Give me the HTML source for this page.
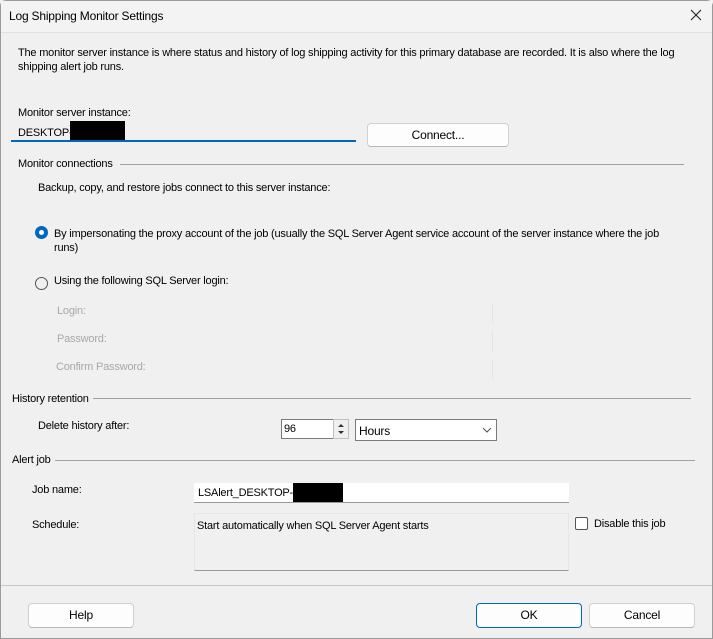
<!DOCTYPE html>
<html><head><meta charset="utf-8">
<style>
*{box-sizing:border-box;margin:0;padding:0}
body{width:713px;height:639px;background:#f0f0f0;font-family:"Liberation Sans",sans-serif;font-size:11px;letter-spacing:-0.2px;color:#000;position:relative;overflow:hidden}
.a{position:absolute;white-space:nowrap}
.frame{position:absolute;left:0;top:0;width:713px;height:639px;border:1px solid #9a9a9a;border-radius:6px 6px 0 0}
.title{position:absolute;left:1px;top:1px;width:711px;height:31px;background:#f3f3f3}
.line{position:absolute;height:1px;background:#a0a0a0}
.gray{color:#a8a8a8}
.btn{position:absolute;background:#fdfdfd;border:1px solid #d0d0d0;border-bottom-color:#b8b8b8;border-radius:4px;text-align:center;font-size:12px}
.radio{position:absolute;width:13px;height:13px;border-radius:50%;border:1px solid #555;background:#f0f0f0}
</style></head><body>
<div class="frame"></div>
<div class="title"></div>
<div class="a" style="left:9px;top:9px;font-size:12px">Log Shipping Monitor Settings</div>
<svg class="a" style="left:690px;top:9px" width="12" height="12"><path d="M1 1L11 11M11 1L1 11" stroke="#222" stroke-width="1.1"/></svg>
<div class="line" style="left:1px;top:32px;width:711px;background:#e2e2e2"></div>

<div class="a" style="left:18px;top:46px;line-height:14px">The monitor server instance is where status and history of log shipping activity for this primary database are recorded. It is also where the log<br>shipping alert job runs.</div>

<div class="a" style="left:18px;top:107px">Monitor server instance:</div>
<div class="a" style="left:18px;top:127px">DESKTOP-</div>
<div class="a" style="left:70px;top:121px;width:55px;height:21px;background:#000"></div>
<div class="a" style="left:11px;top:140px;width:345px;height:2px;background:#0067c0"></div>
<div class="btn" style="left:367px;top:123px;width:142px;height:24px;line-height:22px">Connect...</div>

<div class="a" style="left:18px;top:158px">Monitor connections</div>
<div class="line" style="left:120px;top:164px;width:564px"></div>
<div class="a" style="left:38px;top:182px">Backup, copy, and restore jobs connect to this server instance:</div>

<div class="radio" style="left:35px;top:226px;border:none;background:#0067c0"></div>
<div class="a" style="left:39px;top:230px;width:5px;height:5px;border-radius:50%;background:#fff"></div>
<div class="a" style="left:54px;top:227px;line-height:14px">By impersonating the proxy account of the job (usually the SQL Server Agent service account of the server instance where the job<br>runs)</div>

<div class="radio" style="left:35px;top:277px"></div>
<div class="a" style="left:54px;top:275px">Using the following SQL Server login:</div>

<div class="a gray" style="left:57px;top:305px">Login:</div>
<div class="a gray" style="left:57px;top:333px">Password:</div>
<div class="a gray" style="left:56px;top:361px">Confirm Password:</div>
<div class="a" style="left:359px;top:303px;width:134px;height:20px;border-right:1px solid #e4e4e4"></div>
<div class="a" style="left:359px;top:331px;width:134px;height:20px;border-right:1px solid #e4e4e4"></div>
<div class="a" style="left:359px;top:359px;width:134px;height:20px;border-right:1px solid #e4e4e4"></div>

<div class="a" style="left:12px;top:393px">History retention</div>
<div class="line" style="left:93px;top:398px;width:598px"></div>
<div class="a" style="left:38px;top:420px">Delete history after:</div>
<div class="a" style="left:281px;top:419px;width:52px;height:20px;background:#fff;border:1px solid #7a7a7a;border-right:none"></div>
<div class="a" style="left:284px;top:423px">96</div>
<div class="a" style="left:333px;top:419px;width:16px;height:20px;background:#f0f0f0;border:1px solid #c0c0c0"></div>
<svg class="a" style="left:336px;top:422px" width="10" height="14"><path d="M2 5L5 2L8 5Z M2 9L5 12L8 9Z" fill="#333"/></svg>
<div class="a" style="left:355px;top:419px;width:142px;height:22px;background:#fff;border:1px solid #7a7a7a"></div>
<div class="a" style="left:359px;top:424px;font-size:12px">Hours</div>
<svg class="a" style="left:482px;top:427px" width="10" height="6"><path d="M1 1L5 5L9 1" stroke="#555" fill="none"/></svg>

<div class="a" style="left:12px;top:454px">Alert job</div>
<div class="line" style="left:55px;top:460px;width:640px"></div>
<div class="a" style="left:32px;top:484px">Job name:</div>
<div class="a" style="left:194px;top:483px;width:375px;height:20px;background:#fff;border-bottom:1px solid #999"></div>
<div class="a" style="left:198px;top:487px">LSAlert_DESKTOP-</div>
<div class="a" style="left:293px;top:483px;width:50px;height:19px;background:#000"></div>
<div class="a" style="left:32px;top:519px">Schedule:</div>
<div class="a" style="left:194px;top:513px;width:375px;height:58px;border:1px solid #e6e6e6;border-bottom:1px solid #999"></div>
<div class="a" style="left:197px;top:520px">Start automatically when SQL Server Agent starts</div>
<div class="a" style="left:575px;top:517px;width:13px;height:13px;border:1px solid #555;border-radius:2px;background:#fff"></div>
<div class="a" style="left:594px;top:518px">Disable this job</div>

<div class="line" style="left:1px;top:585px;width:711px;background:#c8c8c8"></div>
<div class="btn" style="left:28px;top:603px;width:106px;height:25px;line-height:23px">Help</div>
<div class="btn" style="left:476px;top:603px;width:106px;height:25px;line-height:23px;border:1px solid #0067c0">OK</div>
<div class="btn" style="left:589px;top:603px;width:106px;height:25px;line-height:23px">Cancel</div>
</body></html>
